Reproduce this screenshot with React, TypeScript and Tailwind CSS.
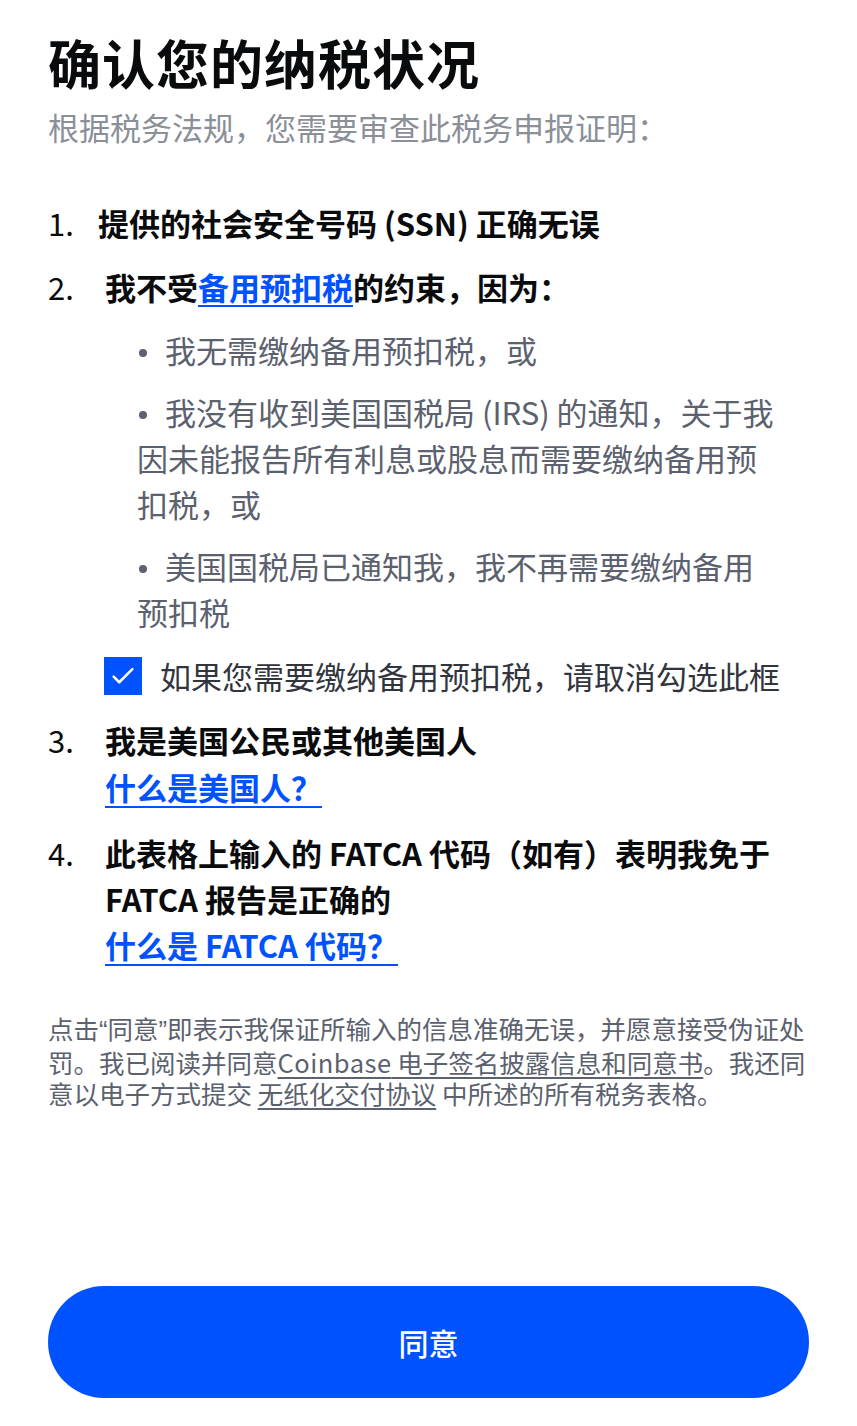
import React, { useState } from 'react';

const FONT = { fontFamily: '"Noto Sans CJK SC", "Noto Sans", sans-serif' };
const LATIN = { fontFamily: '"Liberation Sans", sans-serif' };

const Bullet: React.FC<{ children: React.ReactNode }> = ({ children }) => (
    <p className="text-[31px] leading-[46px] text-[#5b616e]">
        <span className="inline-block align-middle w-[8px] h-[8px] ml-[2px] mr-[18px] mb-[4px] rounded-full bg-[#5b616e]" />
        {children}
    </p>
);

const App: React.FC = () => {
    const [checked, setChecked] = useState(true);

    return (
        <div style={FONT} className="min-h-[1426px] w-[857px] bg-white flex flex-col px-[48px] pt-[26px] pb-[28px]">
            {/* Header */}
            <h1 className="text-[53px] leading-[72px] font-bold text-[#0a0b0d] tracking-[1px]">确认您的纳税状况</h1>
            <p className="mt-[9px] text-[31px] leading-[40px] text-[#8a8f98]">根据税务法规，您需要审查此税务申报证明：</p>

            {/* Items */}
            <div className="mt-[56px] flex flex-col text-[#0a0b0d]">
                <div className="flex items-start text-[31px] leading-[40px] font-bold">
                    <span className="w-[50px] shrink-0 font-normal">1.</span>
                    <span>提供的社会安全号码 (SSN) 正确无误</span>
                </div>

                <div className="mt-[24px] flex items-start text-[31px] leading-[40px] font-bold">
                    <span className="w-[57px] shrink-0 font-normal">2.</span>
                    <span>
                        我不受<a href="#" className="text-[#0052ff] underline decoration-2 underline-offset-[5px]">备用预扣税</a>的约束，因为：
                    </span>
                </div>

                <div className="mt-[20px] ml-[89px] w-[645px] flex flex-col gap-[16px]">
                    <Bullet>我无需缴纳备用预扣税，或</Bullet>
                    <Bullet>我没有收到美国国税局 (IRS) 的通知，关于我因未能报告所有利息或股息而需要缴纳备用预扣税，或</Bullet>
                    <Bullet>美国国税局已通知我，我不再需要缴纳备用预扣税</Bullet>
                </div>

                <label className="mt-[21px] ml-[56px] flex items-center gap-[18px] cursor-pointer">
                    <button
                        type="button"
                        onClick={() => setChecked(!checked)}
                        className={`w-[38px] h-[38px] shrink-0 flex items-center justify-center ${checked ? 'bg-[#0052ff]' : 'bg-white border-2 border-[#8a8f98]'}`}
                    >
                        {checked && (
                            <svg width="30" height="30" viewBox="0 0 24 24" fill="none" stroke="white" strokeWidth="2" strokeLinecap="round" strokeLinejoin="round">
                                <path d="M4.5 12.5l4.5 4.5L19.5 6.5" />
                            </svg>
                        )}
                    </button>
                    <span className="text-[31px] leading-[40px] text-[#32353d] whitespace-nowrap">如果您需要缴纳备用预扣税，请取消勾选此框</span>
                </label>

                <div className="mt-[20px] flex items-start text-[31px] leading-[47px] font-bold">
                    <span className="w-[57px] shrink-0 font-normal">3.</span>
                    <div className="flex flex-col">
                        <span>我是美国公民或其他美国人</span>
                        <a href="#" className="self-start text-[#0052ff] underline decoration-2 underline-offset-[6px]">什么是美国人？</a>
                    </div>
                </div>

                <div className="mt-[20px] flex items-start text-[31px] leading-[46px] font-bold">
                    <span className="w-[57px] shrink-0 font-normal">4.</span>
                    <div className="flex flex-col">
                        <span>此表格上输入的 FATCA 代码（如有）表明我免于 FATCA 报告是正确的</span>
                        <a href="#" className="self-start text-[#0052ff] underline decoration-2 underline-offset-[6px]">什么是 FATCA 代码？</a>
                    </div>
                </div>
            </div>

            {/* Legal text */}
            <p className="mt-[44px] text-[25.5px] leading-[31px] text-[#5b616e]">
                点击<span style={LATIN}>“</span>同意<span style={LATIN}>”</span>即表示我保证所输入的信息准确无误，并愿意接受伪证处罚。我已阅读并同意
                <a href="#" className="underline underline-offset-[4px]"><span className="tracking-[0.5px]">Coinbase</span> 电子签名披露信息和同意书</a>
                。我还同意以电子方式提交 <a href="#" className="underline underline-offset-[4px]">无纸化交付协议</a> 中所述的所有税务表格。
            </p>

            <div className="flex-1" />

            <button
                type="button"
                className="w-full h-[112px] rounded-full bg-[#0052ff] text-white text-[30px] font-medium"
            >
                同意
            </button>
        </div>
    );
};

export default App;
